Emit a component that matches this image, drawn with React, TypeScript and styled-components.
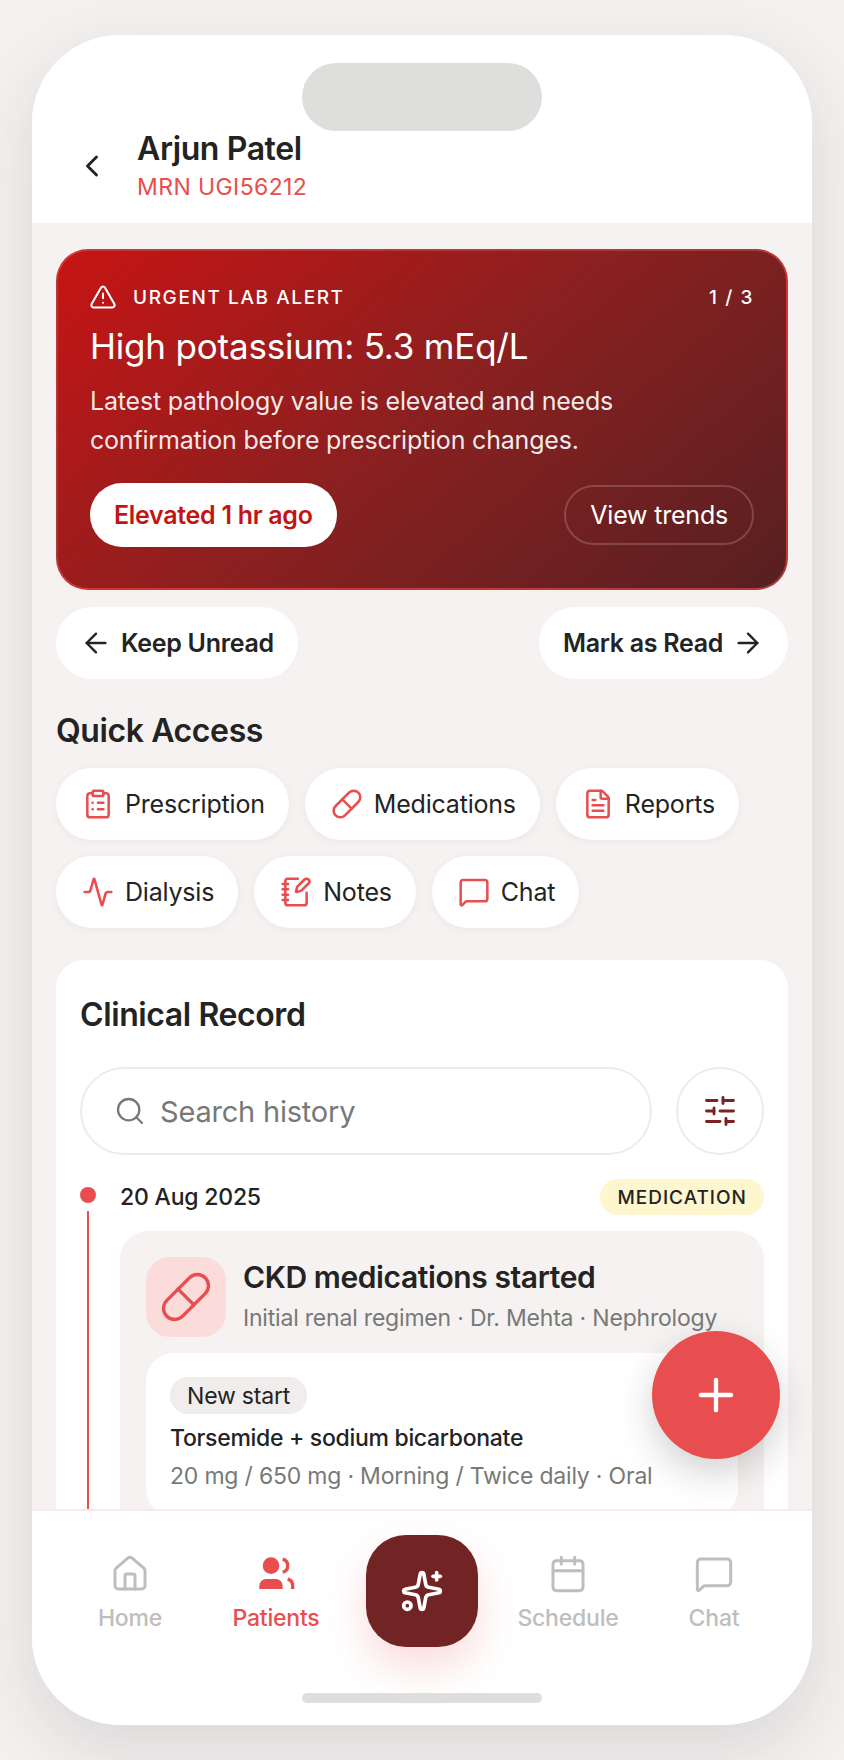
import React from 'react'
import styled, { createGlobalStyle } from 'styled-components'
import {
    Activity,
    ArrowLeft,
    ArrowRight,
    Calendar,
    ChevronLeft,
    ClipboardList,
    FileText,
    House,
    MessageSquare,
    NotebookPen,
    Pill,
    Plus,
    Search,
    SlidersHorizontal,
    Sparkles,
    TriangleAlert,
} from 'lucide-react'

const RED = '#e84e4f'
const INK = '#232323'
const GREY = '#777977'
const MUTED = '#bdbebd'

const QUICK_ROWS = [
    { label: 'Prescription', icon: ClipboardList },
    { label: 'Medications', icon: Pill },
    { label: 'Reports', icon: FileText },
    { label: 'Dialysis', icon: Activity },
    { label: 'Notes', icon: NotebookPen },
    { label: 'Chat', icon: MessageSquare },
]

function PatientsIcon() {
    return <svg width="40" height="40" viewBox="0 0 24 24" fill="none" stroke="currentColor" strokeWidth="2">
        <path d="M2 21v-2a4 4 0 0 1 4-4h6a4 4 0 0 1 4 4v2Z" fill="currentColor" stroke="none" transform="translate(0 0)" />
        <circle cx="9" cy="7" r="5" fill="currentColor" stroke="none" />
        <path d="M22 21v-2a4 4 0 0 0-3-3.87" />
        <path d="M16 3.13a4 4 0 0 1 0 7.75" />
    </svg>
}

export default function App() {
    return <>
        <GlobalStyle />
        <Phone>
            <Notch />
            <Header>
                <BackButton><ChevronLeft size={36} strokeWidth={1.9} /></BackButton>
                <div>
                    <PatientName>Arjun Patel</PatientName>
                    <Mrn>MRN UGI56212</Mrn>
                </div>
            </Header>

            <Content>
                <AlertCard>
                    <AlertTop>
                        <AlertLabel><TriangleAlert size={28} strokeWidth={1.75} />URGENT LAB ALERT</AlertLabel>
                        <AlertCount>1 / 3</AlertCount>
                    </AlertTop>
                    <AlertTitle>High potassium: 5.3 mEq/L</AlertTitle>
                    <AlertBody>Latest pathology value is elevated and needs confirmation before prescription changes.</AlertBody>
                    <AlertActions>
                        <ElevatedPill>Elevated 1 hr ago</ElevatedPill>
                        <TrendsButton>View trends</TrendsButton>
                    </AlertActions>
                </AlertCard>

                <PagerRow>
                    <PagerButton><ArrowLeft size={32} strokeWidth={1.8} />Keep Unread</PagerButton>
                    <PagerButton>Mark as Read<ArrowRight size={32} strokeWidth={1.8} /></PagerButton>
                </PagerRow>

                <SectionTitle>Quick Access</SectionTitle>
                <ChipWrap>
                    {QUICK_ROWS.map(({ label, icon: Icon }) => <Chip key={label}>
                        <Icon size={32} strokeWidth={1.9} color={RED} />
                        {label}
                    </Chip>)}
                </ChipWrap>

                <RecordCard>
                    <RecordTitle>Clinical Record</RecordTitle>
                    <SearchRow>
                        <SearchBox>
                            <Search size={32} strokeWidth={1.7} color={GREY} />
                            Search history
                        </SearchBox>
                        <FilterButton><SlidersHorizontal size={36} strokeWidth={1.9} color="#7b2323" /></FilterButton>
                    </SearchRow>

                    <Timeline>
                        <Rail>
                            <RailDot />
                            <RailLine />
                        </Rail>
                        <Entry>
                            <EntryTop>
                                <EntryDate>20 Aug 2025</EntryDate>
                                <TypeBadge>MEDICATION</TypeBadge>
                            </EntryTop>
                            <EntryCard>
                                <EntryHead>
                                    <EntryTile><Pill size={54} strokeWidth={1.5} color={RED} /></EntryTile>
                                    <div>
                                        <EntryTitle>CKD medications started</EntryTitle>
                                        <EntrySub>Initial renal regimen · Dr. Mehta · Nephrology</EntrySub>
                                    </div>
                                </EntryHead>
                                <DrugCard>
                                    <DrugTag>New start</DrugTag>
                                    <DrugName>Torsemide + sodium bicarbonate</DrugName>
                                    <DrugDose>20 mg / 650 mg · Morning / Twice daily · Oral</DrugDose>
                                </DrugCard>
                            </EntryCard>
                        </Entry>
                    </Timeline>
                </RecordCard>
            </Content>

            <Fab><Plus size={52} strokeWidth={2} color="#fff" /></Fab>

            <BottomNav>
                <NavItem><House size={40} strokeWidth={1.8} /><NavLabel>Home</NavLabel></NavItem>
                <NavItem $active><PatientsIcon /><NavLabel>Patients</NavLabel></NavItem>
                <AiButton><Sparkles size={44} strokeWidth={2} color="#fff" /></AiButton>
                <NavItem><Calendar size={40} strokeWidth={1.8} /><NavLabel>Schedule</NavLabel></NavItem>
                <NavItem><MessageSquare size={40} strokeWidth={1.8} /><NavLabel>Chat</NavLabel></NavItem>
            </BottomNav>
            <HomeBar />
        </Phone>
    </>
}

const GlobalStyle = createGlobalStyle`
    html, body {
        margin: 0;
        background: #f3f1f0;
    }

    body {
        font-family: Inter, 'Noto Sans', sans-serif;
        color: ${INK};
    }

    #root {
        height: 1760px;
        padding-top: 35px;
        box-sizing: border-box;
    }

    svg {
        display: block;
        flex: none;
    }
`

const Phone = styled.div`
    position: relative;
    display: flex;
    flex-direction: column;
    width: 780px;
    height: 1690px;
    margin: 0 auto;
    overflow: hidden;
    border-radius: 88px;
    background: #fff;
    box-shadow: 0 24px 64px rgba(40, 30, 30, 0.12);
`

const Notch = styled.div`
    position: absolute;
    top: 28px;
    left: 270px;
    width: 240px;
    height: 68px;
    border-radius: 34px;
    background: #dededc;
`

const Header = styled.header`
    display: flex;
    align-items: center;
    gap: 27px;
    height: 188px;
    box-sizing: border-box;
    padding: 94px 0 21px 42px;
    background: #fff;
`

const BackButton = styled.div`
    display: flex;
    color: ${INK};
`

const PatientName = styled.div`
    font-size: 32px;
    font-weight: 600;
    line-height: 40px;
    letter-spacing: -0.4px;
`

const Mrn = styled.div`
    margin-top: 3px;
    font-size: 23px;
    line-height: 30px;
    letter-spacing: 0.4px;
    color: ${RED};
`

const Content = styled.main`
    flex: 1;
    min-height: 0;
    overflow: hidden;
    padding: 26px 24px 0;
    background: #f5f2f1;
`

const AlertCard = styled.section`
    box-sizing: border-box;
    height: 341px;
    padding: 28px 32px 0;
    border: 2px solid rgba(232, 78, 79, 0.55);
    border-radius: 32px;
    color: #fff;
    background: linear-gradient(140deg, #c71414 0%, #8a2020 50%, #562021 100%);
`

const AlertTop = styled.div`
    display: flex;
    align-items: center;
    justify-content: space-between;
    height: 36px;
`

const AlertLabel = styled.div`
    display: flex;
    align-items: center;
    gap: 16px;
    margin-left: -1px;
    font-size: 19px;
    font-weight: 500;
    letter-spacing: 1.6px;
`

const AlertCount = styled.div`
    font-size: 19px;
    font-weight: 500;
    letter-spacing: 1.6px;
`

const AlertTitle = styled.h2`
    margin: 6px 0 0;
    font-size: 35px;
    font-weight: 400;
    line-height: 50px;
    letter-spacing: -0.2px;
`

const AlertBody = styled.p`
    margin: 11px 0 0;
    font-size: 25px;
    line-height: 39px;
    letter-spacing: -0.2px;
    color: rgba(255, 255, 255, 0.92);
`

const AlertActions = styled.div`
    display: flex;
    align-items: center;
    justify-content: space-between;
    margin-top: 23px;
`

const ElevatedPill = styled.div`
    display: flex;
    align-items: center;
    height: 64px;
    padding: 0 24px;
    border-radius: 32px;
    font-size: 25px;
    font-weight: 600;
    letter-spacing: -0.3px;
    color: #c31414;
    background: #fff;
`

const TrendsButton = styled.div`
    display: flex;
    align-items: center;
    box-sizing: border-box;
    height: 60px;
    padding: 0 24px;
    border: 2px solid rgba(255, 255, 255, 0.18);
    border-radius: 30px;
    font-size: 25px;
    letter-spacing: -0.2px;
`

const PagerRow = styled.div`
    display: flex;
    justify-content: space-between;
    margin-top: 17px;
`

const PagerButton = styled.div`
    display: flex;
    align-items: center;
    gap: 9px;
    height: 72px;
    padding: 0 24px;
    border-radius: 36px;
    font-size: 25px;
    font-weight: 600;
    letter-spacing: -0.3px;
    background: #fff;
`

const SectionTitle = styled.h2`
    margin: 30px 0 0;
    font-size: 32px;
    font-weight: 600;
    line-height: 44px;
    letter-spacing: -0.4px;
`

const ChipWrap = styled.div`
    display: flex;
    flex-wrap: wrap;
    gap: 16px;
    margin-top: 15px;
`

const Chip = styled.div`
    display: flex;
    align-items: center;
    gap: 11px;
    height: 72px;
    padding: 0 24px 0 26px;
    border-radius: 36px;
    font-size: 25px;
    letter-spacing: -0.2px;
    background: #fff;
    box-shadow: 0 2px 8px rgba(60, 40, 40, 0.05);
`

const RecordCard = styled.section`
    margin-top: 32px;
    padding: 32px 24px 40px;
    border-radius: 28px;
    background: #fff;
`

const RecordTitle = styled.h2`
    margin: 0;
    font-size: 32px;
    font-weight: 600;
    line-height: 46px;
    letter-spacing: -0.4px;
`

const SearchRow = styled.div`
    display: flex;
    gap: 24px;
    margin-top: 29px;
`

const SearchBox = styled.div`
    flex: 1;
    display: flex;
    align-items: center;
    gap: 14px;
    box-sizing: border-box;
    height: 88px;
    padding: 0 32px;
    border: 2px solid #f0ebeb;
    border-radius: 44px;
    font-size: 29px;
    letter-spacing: -0.2px;
    color: ${GREY};
`

const FilterButton = styled.div`
    display: flex;
    align-items: center;
    justify-content: center;
    box-sizing: border-box;
    width: 88px;
    height: 88px;
    border: 2px solid #f0ebeb;
    border-radius: 50%;
`

const Timeline = styled.div`
    display: flex;
    gap: 24px;
    margin-top: 24px;
`

const Rail = styled.div`
    display: flex;
    flex: none;
    flex-direction: column;
    align-items: center;
    width: 16px;
    padding-top: 8px;
`

const RailDot = styled.div`
    width: 16px;
    height: 16px;
    border-radius: 50%;
    background: ${RED};
`

const RailLine = styled.div`
    flex: 1;
    width: 2px;
    margin-top: 8px;
    background: ${RED};
`

const Entry = styled.div`
    flex: 1;
    min-width: 0;
`

const EntryTop = styled.div`
    display: flex;
    align-items: center;
    justify-content: space-between;
    height: 36px;
`

const EntryDate = styled.div`
    font-size: 23px;
    font-weight: 500;
    letter-spacing: -0.2px;
`

const TypeBadge = styled.div`
    display: flex;
    align-items: center;
    height: 36px;
    padding: 0 17px;
    border-radius: 18px;
    font-size: 19px;
    font-weight: 500;
    letter-spacing: 1px;
    background: #fdf6cf;
`

const EntryCard = styled.div`
    margin-top: 16px;
    padding: 26px;
    border-radius: 28px;
    background: #f5f2f1;
`

const EntryHead = styled.div`
    display: flex;
    gap: 17px;
`

const EntryTile = styled.div`
    display: flex;
    flex: none;
    align-items: center;
    justify-content: center;
    width: 80px;
    height: 80px;
    border-radius: 24px;
    background: #fbdcdb;
`

const EntryTitle = styled.div`
    font-size: 30px;
    font-weight: 600;
    line-height: 40px;
    letter-spacing: -0.4px;
`

const EntrySub = styled.div`
    margin-top: 6px;
    font-size: 23px;
    line-height: 30px;
    letter-spacing: -0.2px;
    color: ${GREY};
`

const DrugCard = styled.div`
    margin-top: 16px;
    padding: 24px;
    border-radius: 28px;
    background: #fff;
`

const DrugTag = styled.div`
    display: inline-flex;
    align-items: center;
    height: 37px;
    padding: 0 17px;
    border-radius: 18px;
    font-size: 23px;
    letter-spacing: -0.2px;
    background: #f0edec;
`

const DrugName = styled.div`
    margin-top: 7px;
    font-size: 23px;
    font-weight: 500;
    line-height: 34px;
    letter-spacing: -0.3px;
`

const DrugDose = styled.div`
    margin-top: 4px;
    font-size: 23px;
    line-height: 34px;
    letter-spacing: -0.2px;
    color: ${GREY};
`

const Fab = styled.div`
    position: absolute;
    right: 32px;
    bottom: 266px;
    display: flex;
    align-items: center;
    justify-content: center;
    width: 128px;
    height: 128px;
    border-radius: 50%;
    background: ${RED};
    box-shadow: 0 14px 36px rgba(40, 30, 30, 0.2);
`

const BottomNav = styled.nav`
    display: grid;
    grid-template-columns: repeat(5, 146px);
    box-sizing: border-box;
    height: 216px;
    padding: 24px 25px 0;
    border-top: 2px solid #f8eaea;
    background: #fff;
`

const NavItem = styled.div<{ $active?: boolean }>`
    display: flex;
    flex-direction: column;
    align-items: center;
    padding-top: 19px;
    color: ${({ $active }) => ($active ? RED : MUTED)};
`

const NavLabel = styled.div`
    margin-top: 9px;
    font-size: 23px;
    font-weight: 500;
    line-height: 30px;
    letter-spacing: -0.2px;
`

const AiButton = styled.div`
    display: flex;
    align-items: center;
    justify-content: center;
    justify-self: center;
    width: 112px;
    height: 112px;
    border-radius: 40px;
    background: #722424;
    box-shadow: 0 20px 40px rgba(232, 78, 79, 0.2);
`

const HomeBar = styled.div`
    position: absolute;
    left: 270px;
    bottom: 22px;
    width: 240px;
    height: 10px;
    border-radius: 5px;
    background: #dededc;
`
